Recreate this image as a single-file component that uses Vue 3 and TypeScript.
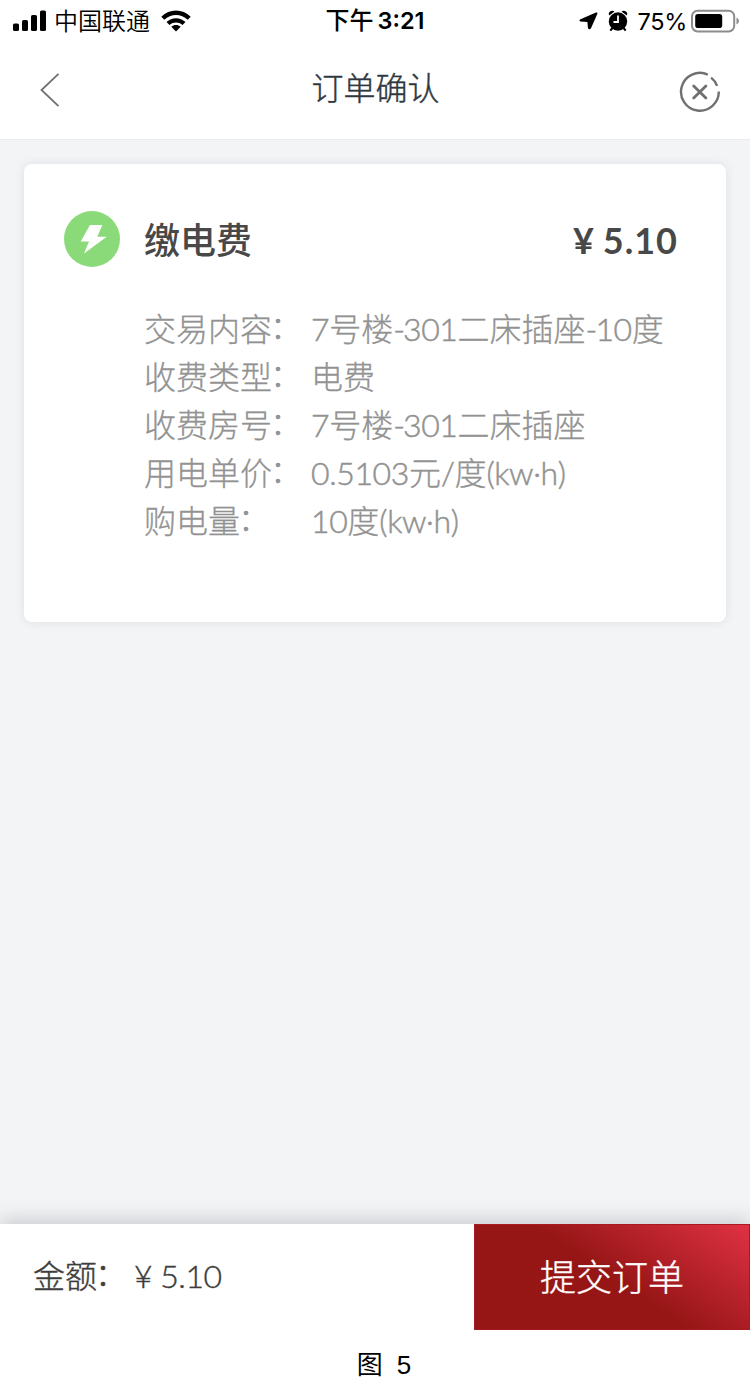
<script setup lang="ts">
interface Detail {
  label: string
  value: string
}

interface Run {
  text: string
  kind: 'cjk' | 'latin' | 'dash'
}

const details: Detail[] = [
  { label: '交易内容', value: '7号楼-301二床插座-10度' },
  { label: '收费类型', value: '电费' },
  { label: '收费房号', value: '7号楼-301二床插座' },
  { label: '用电单价', value: '0.5103元/度(kw·h)' },
  { label: '购电量', value: '10度(kw·h)' },
]

// Splits a value into script runs so that each one gets its own tracking.
function runs(value: string): Run[] {
  const parts = value.match(/-|[\u4e00-\u9fff]+|[^-\u4e00-\u9fff]+/g) ?? []
  return parts.map((text) => ({
    text,
    kind: text === '-' ? 'dash' : /[\u4e00-\u9fff]/.test(text) ? 'cjk' : 'latin',
  }))
}
</script>

<template>
  <div class="page">
    <div class="status">
      <div class="side left">
        <svg class="signal" width="34" height="22" viewBox="0 0 34 22">
          <rect x="0" y="13.5" width="6" height="7.5" rx="1.6" />
          <rect x="9" y="10" width="6" height="11" rx="1.6" />
          <rect x="18" y="5" width="6" height="16" rx="1.6" />
          <rect x="27" y="0.5" width="6" height="20.5" rx="1.6" />
        </svg>
        <span class="carrier">中国联通</span>
        <svg class="wifi" width="30" height="22" viewBox="0 0 30 22">
          <path d="M0.3 6.8C8.5-1.5 21.5-1.5 29.7 6.8L26.7 9.8C20.2 3.4 9.8 3.4 3.3 9.8Z" />
          <path d="M5.5 12C10.8 6.9 19.2 6.9 24.5 12L21.5 15C17.9 11.7 12.1 11.7 8.5 15Z" />
          <path d="M10.3 16.8C12.9 14.5 17.1 14.5 19.7 16.8L15 21.4Z" />
        </svg>
      </div>
      <div class="clock"><span class="period">下午</span><span class="time">3:21</span></div>
      <div class="side right">
        <svg class="locate" width="19" height="18" viewBox="0 0 19 18">
          <path d="M16.9 0.6L1 7.4Q-0.3 8.3 1.3 9.4L8.4 10L9 16.2Q10.2 18.4 12 16.2L18.4 1.8Q18.7 0 16.9 0.6Z" />
        </svg>
        <svg class="alarm" width="20" height="22" viewBox="0 0 20 22">
          <circle cx="10" cy="11.5" r="9.2" />
          <path d="M1.2 5.5Q0 3 2.1 1.5T6.5 1.4ZM18.8 5.5Q20 3 17.9 1.5T13.5 1.4Z" />
          <path class="foot" d="M4.5 18L2.3 20.7M15.5 18L17.7 20.7" />
          <path class="hands" d="M10 5.5V12H5.5" />
        </svg>
        <span class="percent">75%</span>
        <svg class="battery" width="48" height="24" viewBox="0 0 48 24">
          <rect class="shell" x="1" y="1.8" width="42.2" height="20.6" rx="5.5" />
          <rect x="4.2" y="5" width="27" height="14" rx="2.8" />
          <path class="cap" d="M45.5 8.5Q48 9.5 48 12T45.5 15.5Z" />
        </svg>
      </div>
    </div>

    <header class="nav">
      <svg class="back" width="20" height="34" viewBox="0 0 20 34">
        <path d="M18.5 0.8L1.5 17L18.5 33.2" />
      </svg>
      <h1>订单确认</h1>
      <svg class="close" width="42" height="42" viewBox="0 0 42 42">
        <path d="M28.8 3.6A18.9 18.9 0 1 0 39.8 20.4M32.1 6.6A18.9 18.9 0 0 1 38.1 14.8" />
        <path class="cross" d="M14.7 14.9L26.9 27.1M26.9 14.9L14.7 27.1" />
      </svg>
    </header>

    <main>
      <section class="card">
        <div class="summary">
          <svg class="bolt" width="56" height="56" viewBox="0 0 56 56">
            <circle cx="28" cy="28" r="28" />
            <path d="M26 14H38.3L33.3 25.7H42.7L20 42.5L25 30.5H16.7Z" />
          </svg>
          <h2>缴电费</h2>
          <span class="price"><i>¥</i>5.10</span>
        </div>
        <dl>
          <div v-for="item in details" :key="item.label" class="row">
            <dt>{{ item.label }}<span class="colon">：</span></dt>
            <dd><span v-for="(run, n) in runs(item.value)" :key="n" :class="run.kind">{{ run.text }}</span></dd>
          </div>
        </dl>
      </section>
    </main>

    <footer class="bar">
      <span class="sum-label">金额<span class="colon">：</span></span>
      <span class="sum"><i>¥</i>5.10</span>
      <button class="submit" type="button">提交订单</button>
    </footer>
    <p class="caption"><span>图</span><span class="num">5</span></p>
  </div>
</template>

<style>
body {
  margin: 0;
  background: #fff;
}
</style>

<style scoped>
.page {
  display: flex;
  flex-direction: column;
  width: 750px;
  height: 1380px;
  overflow: hidden;
  background: #fff;
  font-family: Lato, "Noto Sans CJK SC", sans-serif;
}
.page > * {
  flex: none;
}
svg {
  display: block;
  flex: none;
}
i {
  font-style: normal;
}
.status {
  display: grid;
  grid-template-columns: 1fr auto 1fr;
  height: 40px;
  color: #000;
  font-family: Inter, "Noto Sans CJK SC", sans-serif;
  font-size: 24px;
  line-height: 40px;
}
.side {
  display: flex;
  align-items: center;
}
.left {
  padding-left: 13px;
}
.carrier {
  margin-left: 7px;
  padding-top: 2px;
  font-weight: 350;
}
.wifi {
  margin-left: 11px;
}
.clock {
  display: flex;
  padding-top: 1px;
  font-weight: 500;
}
.time {
  margin-left: 4px;
  font-size: 23.5px;
  font-weight: 600;
}
.right {
  justify-content: flex-end;
  padding-right: 11px;
}
.alarm {
  margin-left: 10px;
}
.alarm path.foot {
  fill: none;
  stroke: #000;
  stroke-width: 2;
}
.alarm path.hands {
  fill: none;
  stroke: #fff;
  stroke-width: 1.8;
}
.percent {
  margin-left: 9px;
  padding-top: 2px;
  font-size: 23.5px;
  letter-spacing: -0.3px;
}
.battery {
  margin-left: 4px;
}
.shell {
  fill: none;
  stroke: #8c8c8c;
  stroke-width: 2;
}
.cap {
  fill: #8c8c8c;
}
.nav {
  display: flex;
  align-items: center;
  justify-content: space-between;
  box-sizing: border-box;
  height: 100px;
  padding: 4px 29px 0 40px;
  border-bottom: 1px solid #ececee;
}
.back {
  margin-bottom: 4px;
}
.back path,
.close path {
  fill: none;
  stroke: #707070;
  stroke-width: 1.8;
}
.close path {
  stroke-width: 2.4;
}
.close .cross {
  stroke-width: 2.8;
  stroke-linecap: round;
}
h1 {
  margin: 0 0 7px 12px;
  color: #2f3840;
  font-size: 32px;
  font-weight: 300;
  line-height: 48px;
  -webkit-text-stroke: 0.4px currentColor;
}
main {
  box-sizing: border-box;
  height: 1084px;
  padding: 24px 24px 0;
  background: #f3f4f6;
}
.card {
  box-sizing: border-box;
  height: 458px;
  padding: 47px 48px 0 40px;
  border-radius: 8px;
  background: #fff;
  box-shadow: 0 0 10px rgba(60, 70, 80, 0.12);
}
.summary {
  display: flex;
  align-items: center;
  height: 56px;
  color: #484848;
}
.bolt circle {
  fill: #8bda79;
}
.bolt path {
  fill: #fff;
}
h2 {
  margin: 2px 0 0 24px;
  font-size: 36px;
  font-weight: 500;
  line-height: 56px;
}
.price {
  display: flex;
  margin: 2px 0 0 auto;
  font-size: 36px;
  font-weight: 700;
  letter-spacing: 1px;
}
.price i {
  margin-right: 8px;
}
dl {
  margin: 38px 0 0 80px;
}
.row {
  display: flex;
  height: 48px;
  color: #929292;
  font-size: 32px;
  font-weight: 300;
  line-height: 48px;
  white-space: nowrap;
  -webkit-text-stroke: 0.3px currentColor;
}
dt {
  width: 167px;
}
dd {
  margin: 0;
}
.latin {
  letter-spacing: -0.4px;
  -webkit-text-stroke-width: 0.5px;
}
.dash {
  letter-spacing: -2px;
  -webkit-text-stroke-width: 0.5px;
}
.colon {
  margin-left: -2px;
  line-height: 0;
  vertical-align: 2px;
}
.bar {
  position: relative;
  display: flex;
  align-items: center;
  height: 106px;
  background: #fff;
  box-shadow: 0 -2px 20px rgba(50, 55, 60, 0.26);
  color: #3d3d3d;
  font-size: 32px;
  font-weight: 300;
  -webkit-text-stroke: 0.4px currentColor;
}
.sum-label,
.sum {
  padding-bottom: 2px;
  line-height: 48px;
  white-space: nowrap;
}
.sum-label {
  width: 101px;
  padding-left: 33px;
}
.sum {
  letter-spacing: -0.4px;
}
.sum i {
  margin-right: 8px;
}
.submit {
  width: 276px;
  height: 106px;
  margin: 0 0 0 auto;
  padding: 0 0 5px;
  border: 1px solid #a81a1f;
  background: linear-gradient(34deg, #961616 0%, #961616 50%, #e03143 100%);
  color: #fff;
  font-family: inherit;
  font-size: 36px;
  font-weight: 300;
  -webkit-text-stroke: 0.4px currentColor;
}
.caption {
  position: relative;
  display: flex;
  justify-content: center;
  gap: 14px;
  box-sizing: border-box;
  height: 50px;
  margin: 0;
  padding: 20px 0 0 18px;
  background: #fff;
  color: #000;
  font-family: "Liberation Sans", "Noto Sans CJK SC", sans-serif;
  font-size: 26px;
  line-height: 30px;
}
</style>
